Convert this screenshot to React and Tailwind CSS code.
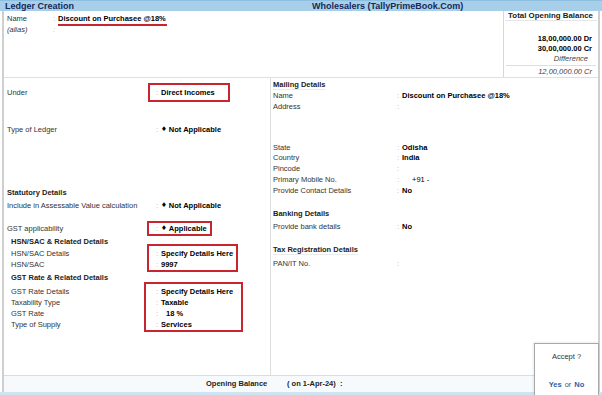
import React from "react";

const RED = "border-[#c8262f]";

function Colon() {
  return <span className="inline-block w-[5px] text-[#b0b0b0]">:</span>;
}

function Row({ label, value, labelW = "w-[152px]", indent = "", h = "h-[11px] leading-[11px]", bold = true, valueClass = "" }) {
  return (
    <div className={`flex ${h}`}>
      <div className={`${labelW} ${indent} shrink-0 text-[#333]`}>{label}</div>
      <Colon />
      <div className={`${bold ? "font-bold text-black" : ""} ${valueClass}`}>{value}</div>
    </div>
  );
}

function Heading({ children, className = "" }) {
  return <div className={`font-bold text-[#222] ${className}`}>{children}</div>;
}

function Diamond() {
  return <span className="mr-[2px] text-[6.5px] align-[1px] font-['DejaVu_Sans',sans-serif]">♦</span>;
}

// value part wrapped in a red box, labels kept outside on the left
function BoxedGroup({ labels, values, labelW, boxW, boxPl, pt = "pt-0", className = "" }) {
  return (
    <div className={`flex ${className}`}>
      <div className={`${labelW} shrink-0 pt-[2px]`}>
        <div className={pt}>
          {labels.map((l, i) => (
            <div key={i} className={`h-[11px] leading-[11px] text-[#333] ${l.indent || ""}`}>
              {l.text}
            </div>
          ))}
        </div>
      </div>
      <div className={`${boxW} ${boxPl} border-2 ${RED}`}>
        <div className={pt}>
          {values.map((v, i) => (
            <div key={i} className="flex h-[11px] leading-[11px]">
              <Colon />
              <div className={`font-bold text-black ${v.cls || ""}`}>{v.text}</div>
            </div>
          ))}
        </div>
      </div>
    </div>
  );
}

export default function App() {
  return (
    <div className="relative w-[602px] h-[395px] overflow-hidden bg-white font-['Liberation_Sans',Arial,sans-serif] text-[7.5px] text-[#333]">
      {/* title bar */}
      <div className="flex h-[11px] bg-[#a7cfea] border-t border-[#8fbfe0] text-[9px] leading-[10px] font-bold text-[#16295a]">
        <div className="w-[312px] pl-[5px]">Ledger Creation</div>
        <div>Wholesalers (TallyPrimeBook.Com)</div>
      </div>

      <div className="ml-[2px] w-[598px] border-x-2 border-[#cfcfcf]">
        {/* top: name / alias and opening balance box */}
        <div className="flex h-[67px] border-b border-[#e0e0e0]">
          <div className="w-[499px] pl-[3px] pt-[2px]">
            <div className="flex h-[11px] leading-[11px]">
              <div className="w-[46px]">Name</div>
              <Colon />
              <span className={`inline-block h-[12.5px] font-bold text-black border-b-2 ${RED} pr-[1px]`}>
                Discount on Purchasee @18%
              </span>
            </div>
            <div className="flex h-[11px] leading-[11px] italic">
              <div className="w-[46px]">(alias)</div>
              <Colon />
            </div>
          </div>
          <div className="flex-1 border-l border-[#d6d6d6] text-right">
            <div className="mx-[1px] h-[10px] leading-[10px] pr-[4px] whitespace-nowrap text-[7.9px] font-bold text-[#222] border-b border-[#e6e6e6]">
              Total Opening Balance
            </div>
            <div className="pr-[6px] pt-[13px]">
              <div className="h-[10px] leading-[10px] font-bold text-black">18,00,000.00 Dr</div>
              <div className="h-[10px] leading-[10px] font-bold text-black">30,00,000.00 Cr</div>
              <div className="h-[10px] leading-[10px] italic text-[#444] pr-[4px]">Difference</div>
            </div>
            <div className="mx-[2px] mt-[1px] border-t border-[#dedede] pr-[4px] h-[11px] leading-[11px] italic text-[#444]">
              12,00,000.00 Cr
            </div>
          </div>
        </div>

        {/* main body */}
        <div className="flex h-[297px]">
          {/* left column */}
          <div className="w-[267px] border-r border-[#dcdcdc] pl-[3px] pt-[5px]">
            <BoxedGroup
              labelW="w-[141px]"
              boxW="w-[82px]"
              boxPl="pl-[6px]"
              pt="pt-[2px]"
              className="h-[19px]"
              labels={[{ text: "Under" }]}
              values={[{ text: "Direct Incomes" }]}
            />
            <div className="mt-[22px]">
              <Row label="Type of Ledger" labelW="w-[149px]" value={<><Diamond />Not Applicable</>} />
            </div>
            <Heading className="mt-[52px] h-[11px] leading-[11px]">Statutory Details</Heading>
            <div className="mt-[2px]">
              <Row label="Include in Assessable Value calculation" labelW="w-[149px]" value={<><Diamond />Not Applicable</>} />
            </div>
            <BoxedGroup
              labelW="w-[140px]"
              boxW="w-[65px]"
              boxPl="pl-[7px]"
              className="mt-[10px]"
              labels={[{ text: "GST applicability" }]}
              values={[{ text: <><Diamond />Applicable</> }]}
            />
            <Heading className="pl-[4px] h-[8px] leading-[11px]">HSN/SAC &amp; Related Details</Heading>
            <BoxedGroup
              labelW="w-[140px]"
              boxW="w-[91px]"
              boxPl="pl-[7px]"
              pt="pt-[2px]"
              labels={[
                { text: "HSN/SAC Details", indent: "pl-[4px]" },
                { text: "HSN/SAC", indent: "pl-[4px]" },
              ]}
              values={[{ text: "Specify Details Here" }, { text: "9997" }]}
            />
            <Heading className="pl-[4px] h-[10px] leading-[12px]">GST Rate &amp; Related Details</Heading>
            <BoxedGroup
              labelW="w-[137px]"
              boxW="w-[99px]"
              boxPl="pl-[10px]"
              pt="pt-[2px]"
              labels={[
                { text: "GST Rate Details", indent: "pl-[4px]" },
                { text: "Taxability Type", indent: "pl-[4px]" },
                { text: "GST Rate", indent: "pl-[4px]" },
                { text: "Type of Supply", indent: "pl-[4px]" },
              ]}
              values={[
                { text: "Specify Details Here" },
                { text: "Taxable" },
                { text: "18 %", cls: "pl-[5px]" },
                { text: "Services" },
              ]}
            />
          </div>

          {/* right column */}
          <div className="flex-1 pl-[2px] pt-[1px]">
            <Heading className="h-[11px] leading-[11px]">
              <span className="border-b border-[#ececec]">Mailing Details</span>
            </Heading>
            <Row label="Name" labelW="w-[124px]" value="Discount on Purchasee @18%" />
            <Row label="Address" labelW="w-[124px]" value="" />
            <div className="mt-[31px]">
              <Row label="State" labelW="w-[124px]" h="h-[10px] leading-[10px]" value="Odisha" />
              <Row label="Country" labelW="w-[124px]" h="h-[10px] leading-[10px]" value="India" />
              <Row label="Pincode" labelW="w-[124px]" value="" />
              <Row label="Primary Mobile No." labelW="w-[124px]" value="+91  -" valueClass="pl-[10px] font-normal" />
              <Row label="Provide Contact Details" labelW="w-[124px]" h="h-[12px] leading-[12px]" value="No" />
            </div>
            <Heading className="mt-[11px] h-[11px] leading-[11px]">Banking Details</Heading>
            <div className="mt-[2px]">
              <Row label="Provide bank details" labelW="w-[124px]" value="No" />
            </div>
            <Heading className="mt-[12px] h-[11px] leading-[11px]">
              <span className="border-b border-[#ececec]">Tax Registration Details</span>
            </Heading>
            <div className="mt-[3px]">
              <Row label="PAN/IT No." labelW="w-[124px]" value="" />
            </div>
          </div>
        </div>

        {/* bottom opening balance bar */}
        <div className="flex h-[17px] items-center border-t border-[#dcdcdc] bg-[#f6fafd] font-bold text-[#222]">
          <div className="w-[202px]" />
          <div className="w-[81px]">Opening Balance</div>
          <div>( on 1-Apr-24)&nbsp;&nbsp;:</div>
        </div>
      </div>
      <div className="h-[3px] bg-[#cfe3f0]" />

      {/* accept prompt */}
      <div className="absolute left-[534px] top-[343px] flex h-[53px] w-[65px] flex-col items-center border border-[#a8a8a8] bg-white shadow-[-1px_-1px_2px_rgba(0,0,0,0.08)]">
        <div className="mt-[7px] text-[#333]">Accept ?</div>
        <div className="mt-auto mb-[5px]">
          <span className="font-bold text-[#2a62a8]">Yes</span>
          <span className="mx-[3px] text-[#555]">or</span>
          <span className="font-bold text-[#2a62a8]">No</span>
        </div>
      </div>
    </div>
  );
}
